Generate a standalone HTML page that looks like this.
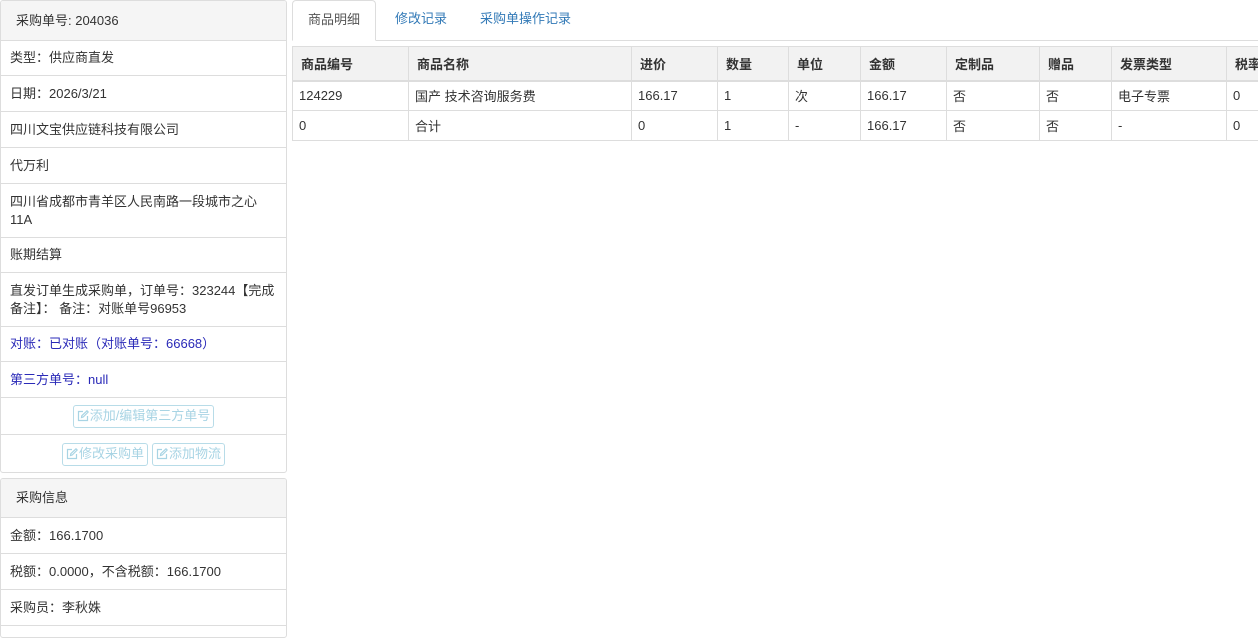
<!DOCTYPE html>
<html><head><meta charset="utf-8"><style>
*{box-sizing:border-box;margin:0;padding:0}
body{width:1258px;height:629px;overflow:hidden;background:#fff;font-family:"Liberation Sans","Noto Sans CJK SC",sans-serif;font-size:13px;color:#333;position:relative}
.p{position:absolute;left:0;width:287px;border:1px solid #ddd;border-radius:3px;overflow:hidden}
.r{position:absolute;left:0;right:0;border-top:1px solid #ddd;padding:0 9px;display:flex;align-items:center;line-height:18px}
.h{background:#f5f5f5;padding-left:15px;border-top:none}
.blue{color:#2a2ab8}
.btn{display:inline-flex;align-items:center;height:23px;padding:0 3px;border:1px solid #b8dce8;border-radius:3px;color:#a8d4e4;font-size:13px;margin:0 2px}
.btn svg{margin-right:1px}
.tab{position:absolute;top:0;height:42px;line-height:40px;font-size:13px}
table{position:absolute;left:292px;top:46px;border-collapse:collapse;width:980px}
td,th{border:1px solid #ddd;padding:0 6px;text-align:left;white-space:nowrap}
th{background:#f2f2f2;height:34px;font-weight:bold;border-bottom:2px solid #ddd;padding:0 8px}
td{height:30px}
</style></head><body>
<div class="p" style="top:0;height:473px">
 <div class="r h" style="top:0;height:39px">采购单号: 204036</div>
 <div class="r" style="top:39px;height:35px">类型：供应商直发</div>
 <div class="r" style="top:74px;height:36px">日期：2026/3/21</div>
 <div class="r" style="top:110px;height:36px">四川文宝供应链科技有限公司</div>
 <div class="r" style="top:146px;height:36px">代万利</div>
 <div class="r" style="top:182px;height:54px">四川省成都市青羊区人民南路一段城市之心<br>11A</div>
 <div class="r" style="top:236px;height:35px">账期结算</div>
 <div class="r" style="top:271px;height:54px">直发订单生成采购单，订单号：323244【完成<br>备注】： 备注：对账单号96953</div>
 <div class="r blue" style="top:325px;height:35px">对账：已对账（对账单号：66668）</div>
 <div class="r blue" style="top:360px;height:36px">第三方单号：null</div>
 <div class="r" style="top:396px;height:37px;justify-content:center"><span class="btn"><svg width="12" height="12" viewBox="0 0 12 12" fill="none" stroke="#a8d4e4" stroke-width="1.2"><path d="M6 1.5H1.5v9h9V6M4.5 7.5l.3-1.8L10 .8l1.2 1.2L6.2 7z"/></svg>添加/编辑第三方单号</span></div>
 <div class="r" style="top:433px;height:39px;justify-content:center"><span class="btn"><svg width="12" height="12" viewBox="0 0 12 12" fill="none" stroke="#a8d4e4" stroke-width="1.2"><path d="M6 1.5H1.5v9h9V6M4.5 7.5l.3-1.8L10 .8l1.2 1.2L6.2 7z"/></svg>修改采购单</span><span class="btn"><svg width="12" height="12" viewBox="0 0 12 12" fill="none" stroke="#a8d4e4" stroke-width="1.2"><path d="M6 1.5H1.5v9h9V6M4.5 7.5l.3-1.8L10 .8l1.2 1.2L6.2 7z"/></svg>添加物流</span></div>
</div>
<div class="p" style="top:478px;height:160px">
 <div class="r h" style="top:0;height:38px">采购信息</div>
 <div class="r" style="top:38px;height:36px">金额：166.1700</div>
 <div class="r" style="top:74px;height:36px">税额：0.0000，不含税额：166.1700</div>
 <div class="r" style="top:110px;height:36px">采购员：李秋姝</div>
 <div class="r" style="top:146px;height:36px"></div>
</div>
<div style="position:absolute;left:292px;right:0;top:40px;border-top:1px solid #ddd"></div>
<div class="tab" style="left:292px;width:84px;height:41px;border:1px solid #ddd;border-bottom:1px solid #fff;border-radius:4px 4px 0 0;text-align:center;color:#555;background:#fff;line-height:38px">商品明细</div>
<div class="tab" style="left:395px;color:#337ab7;line-height:38px">修改记录</div>
<div class="tab" style="left:480px;color:#337ab7;line-height:38px">采购单操作记录</div>
<table>
<colgroup><col style="width:116px"><col style="width:223px"><col style="width:86px"><col style="width:71px"><col style="width:72px"><col style="width:86px"><col style="width:93px"><col style="width:72px"><col style="width:115px"><col></colgroup>
<tr><th>商品编号</th><th>商品名称</th><th>进价</th><th>数量</th><th>单位</th><th>金额</th><th>定制品</th><th>赠品</th><th>发票类型</th><th>税率</th></tr>
<tr><td>124229</td><td>国产 技术咨询服务费</td><td>166.17</td><td>1</td><td>次</td><td>166.17</td><td>否</td><td>否</td><td>电子专票</td><td>0</td></tr>
<tr><td>0</td><td>合计</td><td>0</td><td>1</td><td>-</td><td>166.17</td><td>否</td><td>否</td><td>-</td><td>0</td></tr>
</table>
</body></html>
